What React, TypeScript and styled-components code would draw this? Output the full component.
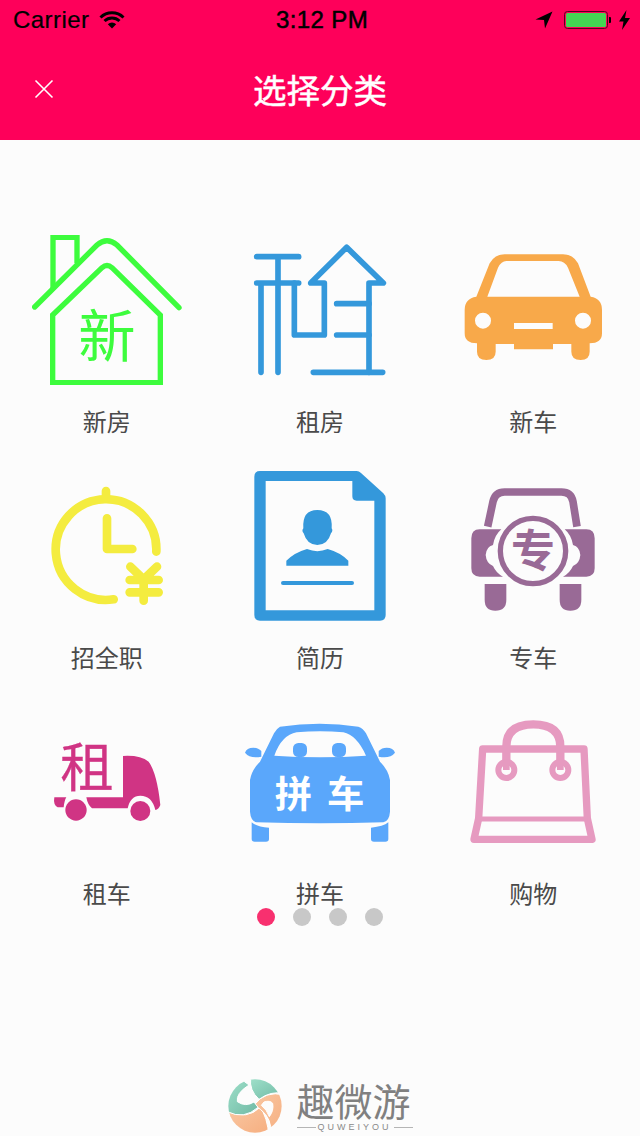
import React from "react";
import styled, { createGlobalStyle } from "styled-components";

const CJK = `"Noto Sans CJK SC", "Noto Sans", sans-serif`;

const Global = createGlobalStyle`
  html, body { margin: 0; padding: 0; background: #fcfcfc; }
  * { box-sizing: border-box; }
`;

const Screen = styled.div`
  width: 640px;
  height: 1136px;
  display: flex;
  flex-direction: column;
  background: #fcfcfc;
  overflow: hidden;
  font-family: ${CJK};
`;
const Header = styled.header`
  height: 140px;
  background: #fe005a;
  flex: none;
  display: flex;
  flex-direction: column;
`;
const StatusBar = styled.div`
  height: 40px;
  display: grid;
  grid-template-columns: 1fr auto 1fr;
  align-items: center;
  padding: 0 10px 0 13px;
  color: #000;
  font-family: "Liberation Sans", Arial, sans-serif;
  font-size: 24px;
`;
const StatusLeft = styled.div`
  display: flex;
  align-items: center;
  gap: 9px;
`;
const Carrier = styled.span`
  letter-spacing: 0.45px;
  -webkit-text-stroke: 0.2px #000;
`;
const Clock = styled.div`
  font-weight: 400;
  -webkit-text-stroke: 0.5px #000;
  letter-spacing: 0.4px;
  padding-left: 1px;
`;
const StatusRight = styled.div`
  display: flex;
  align-items: center;
  justify-content: flex-end;
`;
const ArrowSlot = styled.div`
  display: flex;
  margin-right: 11px;
`;
const BatterySlot = styled.div`
  display: flex;
  margin-right: 8px;
`;
const NavBar = styled.div`
  height: 100px;
  display: grid;
  grid-template-columns: 88px 1fr 88px;
  align-items: center;
  padding-bottom: 2px;
`;
const CloseButton = styled.button`
  border: 0;
  padding: 0;
  background: none;
  display: flex;
  align-items: center;
  justify-content: center;
  height: 40px;
`;
const Title = styled.h1`
  margin: 0;
  text-align: center;
  color: #fff;
  font-size: 33.5px;
  font-weight: 400;
  -webkit-text-stroke: 0.5px #fff;
  line-height: 44px;
`;
const CategoryGrid = styled.div`
  display: grid;
  grid-template-columns: repeat(3, 1fr);
  row-gap: 35px;
  padding-top: 95px;
`;
const Category = styled.div`
  display: flex;
  flex-direction: column;
  align-items: center;
`;
const IconSvg = styled.svg`
  display: block;
  width: 150px;
  height: 150px;
`;
const Label = styled.div`
  margin-top: 23px;
  height: 28px;
  line-height: 26px;
  font-size: 24px;
  color: #4a4a4a;
`;
const Pager = styled.div`
  display: flex;
  justify-content: center;
  gap: 18px;
`;
const Dot = styled.span<{ $active?: boolean }>`
  width: 18px;
  height: 18px;
  border-radius: 50%;
  background: ${(p) => (p.$active ? "#f8306f" : "#c8c8c8")};
`;
const Footer = styled.footer`
  margin-top: auto;
  padding: 0 0 3px 0;
  display: flex;
  justify-content: center;
  align-items: center;
  gap: 15px;
`;
const BrandText = styled.div`
  display: flex;
  flex-direction: column;
  width: 116px;
`;
const BrandName = styled.div`
  font-size: 38px;
  line-height: 44px;
  font-weight: 400;
  color: #808080;
  white-space: nowrap;
`;
const BrandTag = styled.div`
  display: flex;
  align-items: center;
  gap: 2px;
  font-family: "Liberation Sans", Arial, sans-serif;
  font-size: 9px;
  line-height: 11px;
  letter-spacing: 3px;
  color: #8a8a8a;
  white-space: nowrap;
  &::before, &::after {
    content: "";
    flex: 1;
    height: 1px;
    background: #b5b5b5;
  }
`;
const IconText = styled.text<{ $bold?: boolean }>`
  font-family: ${CJK};
  font-weight: ${(p) => (p.$bold ? 700 : 400)};
  text-anchor: middle;
`;

const Wifi = () => (
  <svg width="26" height="18" viewBox="0 0 26 18" fill="none" stroke="#000" strokeWidth="3">
    <path d="M1.5 6.5 A16.5 16.5 0 0 1 24.5 6.5" />
    <path d="M5.5 10 A11 11 0 0 1 20.5 10" />
    <path d="M13 17.5 L8.8 13.2 A6 6 0 0 1 17.2 13.2 Z" fill="#000" stroke="none" />
  </svg>
);
const LocationArrow = () => (
  <svg width="18" height="18" viewBox="0 0 18 18"><path d="M17.5 0.5 L0.5 8.5 L9 9 L10 17.5 Z" fill="#000" /></svg>
);
const Battery = () => (
  <svg width="47" height="18" viewBox="0 0 47 18">
    <rect x="0.5" y="0.5" width="43" height="17" rx="3" fill="none" stroke="#5a0020" />
    <rect x="2" y="2" width="40" height="14" rx="1.5" fill="#45d653" />
    <path d="M45 6 h1 a1 1 0 0 1 1 1 v4 a1 1 0 0 1 -1 1 h-1 z" fill="#000" />
  </svg>
);
const Bolt = () => (
  <svg width="11" height="20" viewBox="0 0 11 20"><path d="M7.5 0 L0 11.5 H4.5 L3 20 L11 8 H6 Z" fill="#000" /></svg>
);
const CloseIcon = () => (
  <svg width="20" height="20" viewBox="0 0 20 20" stroke="#fff" strokeWidth="1.6" fill="none">
    <path d="M1.5 1.5 L18.5 18.5 M18.5 1.5 L1.5 18.5" />
  </svg>
);

const NewHouse = () => (
  <IconSvg viewBox="35 30 450 450" fill="none" stroke="#3dfc3d" strokeWidth="16">
    <path d="M98 190 V37 H170 V115" />
    <path d="M43 246 L230 60 Q260 34 290 60 L476 248" strokeLinecap="round" />
    <path d="M97 270 L245 128 Q260 115 275 128 L420 270 V473 H97 Z" />
    <IconText x="260" y="396" fontSize="172" fill="#3dfc3d" stroke="none">新</IconText>
  </IconSvg>
);
const RentHouse = () => (
  <IconSvg viewBox="15 0 450 450" fill="none" stroke="#3498db" strokeWidth="17" strokeLinecap="round" strokeLinejoin="round">
    <path d="M50 65 H176 M50 144 H176 M63 144 V412 M114 65 V412" />
    <path d="M163 144 V300 H253 V144 H212 L320 37 L430 144 H387 V412" />
    <path d="M220 412 H428 M290 206 H387 M290 300 H387" />
  </IconSvg>
);
const NewCar = () => (
  <IconSvg viewBox="10 -30 450 450">
    <path
      fill="#f8a94a"
      fillRule="evenodd"
      d="M65 155 L105 55 Q120 28 150 28 H325 Q355 28 370 55 L408 155 Q442 160 442 195 V265 Q442 295 405 295 V320 Q405 345 378 345 Q350 345 350 320 V297 H295 V313 H178 V297 H123 V320 Q123 345 95 345 Q67 345 67 320 V295 Q30 295 30 265 V195 Q30 160 65 155 Z
      M98 155 H375 L340 68 Q330 48 312 48 H155 Q140 48 130 68 Z
      M109 227 A24 24 0 1 0 61 227 A24 24 0 1 0 109 227 Z
      M409 227 A24 24 0 1 0 361 227 A24 24 0 1 0 409 227 Z
      M178 234 H294 V252 H178 Z"
    />
  </IconSvg>
);
const FullTime = () => (
  <IconSvg viewBox="-25 -27 450 450" fill="none" stroke="#f4ec3f" strokeWidth="26" strokeLinecap="round" strokeLinejoin="round">
    <path d="M348 215 A151 151 0 1 0 220 358" />
    <path d="M197 33 V55" />
    <path d="M200 115 V207 H276" />
    <path d="M270 260 L310 298 L350 260 M268 300 H355 M268 337 H355 M310 298 V362" />
  </IconSvg>
);
const Resume = () => (
  <IconSvg viewBox="0 18 450 450">
    <path
      fill="#3498db"
      fillRule="evenodd"
      d="M45 18 H335 Q342 18 348 24 L415 85 Q422 92 422 100 V450 Q422 467 405 467 H45 Q28 467 28 450 V35 Q28 18 45 18 Z M62 48 V436 H388 V107 H335 Q322 107 322 94 V48 Z"
    />
    <path fill="#3498db" d="M217 135 Q264 135 260 190 Q265 197 258 205 Q248 240 217 240 Q186 240 176 205 Q169 197 175 190 Q171 135 217 135 Z" />
    <path fill="#3498db" d="M124 302 V287 Q150 262 186 252 Q217 265 248 252 Q285 262 310 287 V302 Z" />
    <path d="M114 354 H321" stroke="#3498db" strokeWidth="12" strokeLinecap="round" />
  </IconSvg>
);
const ChauffeurCar = () => (
  <IconSvg viewBox="-5 -27 450 450">
    <path d="M84 140 L100 65 Q106 36 135 36 H305 Q335 36 340 65 L352 140" fill="none" stroke="#996a96" strokeWidth="23" />
    <path fill="#996a96" d="M60 148 H125 Q105 165 100 195 Q80 200 78 225 Q80 250 100 258 Q110 280 130 290 H60 Q35 290 35 265 V175 Q35 148 60 148 Z" />
    <path fill="#996a96" d="M380 148 H315 Q335 165 340 195 Q360 200 362 225 Q360 250 340 258 Q330 280 310 290 H380 Q405 290 405 265 V175 Q405 148 380 148 Z" />
    <circle cx="220" cy="213" r="98" fill="none" stroke="#996a96" strokeWidth="16" />
    <IconText $bold x="220" y="262" fontSize="132" fill="#996a96">专</IconText>
    <path fill="#996a96" d="M75 312 H140 V360 Q140 392 107 392 Q75 392 75 360 Z" />
    <path fill="#996a96" d="M300 312 H365 V360 Q365 392 332 392 Q300 392 300 360 Z" />
  </IconSvg>
);
const RentCar = () => (
  <IconSvg viewBox="-25 -69 450 450">
    <IconText x="140" y="170" fontSize="160" fill="#d03484" stroke="#d03484" strokeWidth="1">租</IconText>
    <g fill="#d03484">
      <path d="M138 202 H248 V78 Q300 75 325 95 Q350 130 360 225 Q355 238 345 240 Q335 197 300 197 Q270 197 262 235 H155 Q142 225 138 202 Z" />
      <path d="M42 202 H78 Q72 212 70 232 H52 Q38 225 42 202 Z" />
      <circle cx="107" cy="240" r="32" />
      <circle cx="300" cy="243" r="30" />
    </g>
  </IconSvg>
);
const Carpool = () => (
  <IconSvg viewBox="15 -24 450 450">
    <g fill="#5aa7fb">
      <path
        fillRule="evenodd"
        d="M120 35 Q240 18 355 35 Q370 40 378 55 L420 140 Q445 165 450 195 V290 Q448 318 430 322 Q240 328 50 322 Q32 318 30 290 V195 Q35 165 60 140 L102 55 Q110 40 120 35 Z
        M103 122 Q240 132 378 122 Q350 60 310 52 Q240 45 170 52 Q125 60 103 122 Z"
      />
      <rect x="159" y="84" width="42" height="42" rx="16" />
      <rect x="276" y="84" width="42" height="42" rx="16" />
      <path d="M15 113 Q20 98 40 98 Q55 98 64 108 V125 Q30 132 15 113 Z" />
      <path d="M465 113 Q460 98 440 98 Q425 98 416 108 V125 Q450 132 465 113 Z" />
      <path d="M35 322 Q50 335 87 338 V372 Q87 380 78 380 H44 Q35 380 35 372 Z" />
      <path d="M445 322 Q430 335 393 338 V372 Q393 380 402 380 H436 Q445 380 445 372 Z" />
    </g>
    <IconText $bold x="160" y="278" fontSize="112" fill="#fff">拼</IconText>
    <IconText $bold x="317" y="278" fontSize="112" fill="#fff">车</IconText>
  </IconSvg>
);
const Shopping = () => (
  <IconSvg viewBox="-20 -24 450 450" fill="none" stroke="#e69ac0">
    <path d="M54 102 H358 L368 310 L382 373 H28 L42 310 Z" strokeWidth="22" strokeLinejoin="round" />
    <path d="M42 312 H368" strokeWidth="15" />
    <path d="M125 150 V95 Q125 28 206 28 Q287 28 287 95 V150" strokeWidth="25" />
    <circle cx="125" cy="165" r="24" strokeWidth="18" fill="#fcfcfc" />
    <circle cx="287" cy="165" r="24" strokeWidth="18" fill="#fcfcfc" />
    <path d="M125 145 V165 M287 145 V165" strokeWidth="20" />
  </IconSvg>
);

const Logo = () => (
  <svg width="54" height="54" viewBox="22 27 162 162">
    <defs>
      <linearGradient id="teal" x1="0" y1="0" x2="1" y2="1">
        <stop offset="0" stopColor="#9fe0ca" />
        <stop offset="1" stopColor="#6fb9a4" />
      </linearGradient>
      <linearGradient id="orange" x1="0" y1="0" x2="1" y2="1">
        <stop offset="0" stopColor="#f9c7a2" />
        <stop offset="1" stopColor="#f6ad7e" />
      </linearGradient>
      <clipPath id="disc"><circle cx="103" cy="108" r="80" /></clipPath>
    </defs>
    <g clipPath="url(#disc)" stroke="#fff" strokeWidth="3">
      <path fill="url(#orange)" d="M20 125 Q80 150 118 112 Q140 140 145 200 L40 200 Z" />
      <path
        fill="url(#orange)"
        fillRule="evenodd"
        d="M100 105 Q135 60 190 75 L190 200 L150 170 Q145 130 100 105 Z M130 96 Q148 90 156 100 Q160 122 146 140 Q138 118 122 106 Z"
      />
      <path fill="url(#teal)" d="M90 25 Q160 20 190 70 Q150 62 115 88 Q85 60 90 25 Z" />
      <path fill="url(#teal)" d="M65 30 L20 60 L20 125 Q70 150 112 112 L100 96 Q75 112 50 95 Q45 70 85 45 Z" />
    </g>
  </svg>
);

const items: [string, React.FC][] = [
  ["新房", NewHouse],
  ["租房", RentHouse],
  ["新车", NewCar],
  ["招全职", FullTime],
  ["简历", Resume],
  ["专车", ChauffeurCar],
  ["租车", RentCar],
  ["拼车", Carpool],
  ["购物", Shopping],
];

export default function App() {
  return (
    <Screen>
      <Global />
      <Header>
        <StatusBar>
          <StatusLeft>
            <Carrier>Carrier</Carrier>
            <Wifi />
          </StatusLeft>
          <Clock>3:12 PM</Clock>
          <StatusRight>
            <ArrowSlot><LocationArrow /></ArrowSlot>
            <BatterySlot><Battery /></BatterySlot>
            <Bolt />
          </StatusRight>
        </StatusBar>
        <NavBar>
          <CloseButton aria-label="close"><CloseIcon /></CloseButton>
          <Title>选择分类</Title>
        </NavBar>
      </Header>
      <CategoryGrid>
        {items.map(([label, Icon]) => (
          <Category key={label}>
            <Icon />
            <Label>{label}</Label>
          </Category>
        ))}
      </CategoryGrid>
      <Pager>
        {[0, 1, 2, 3].map((i) => (
          <Dot key={i} $active={i === 0} />
        ))}
      </Pager>
      <Footer>
        <Logo />
        <BrandText>
          <BrandName>趣微游</BrandName>
          <BrandTag>QUWEIYOU</BrandTag>
        </BrandText>
      </Footer>
    </Screen>
  );
}
